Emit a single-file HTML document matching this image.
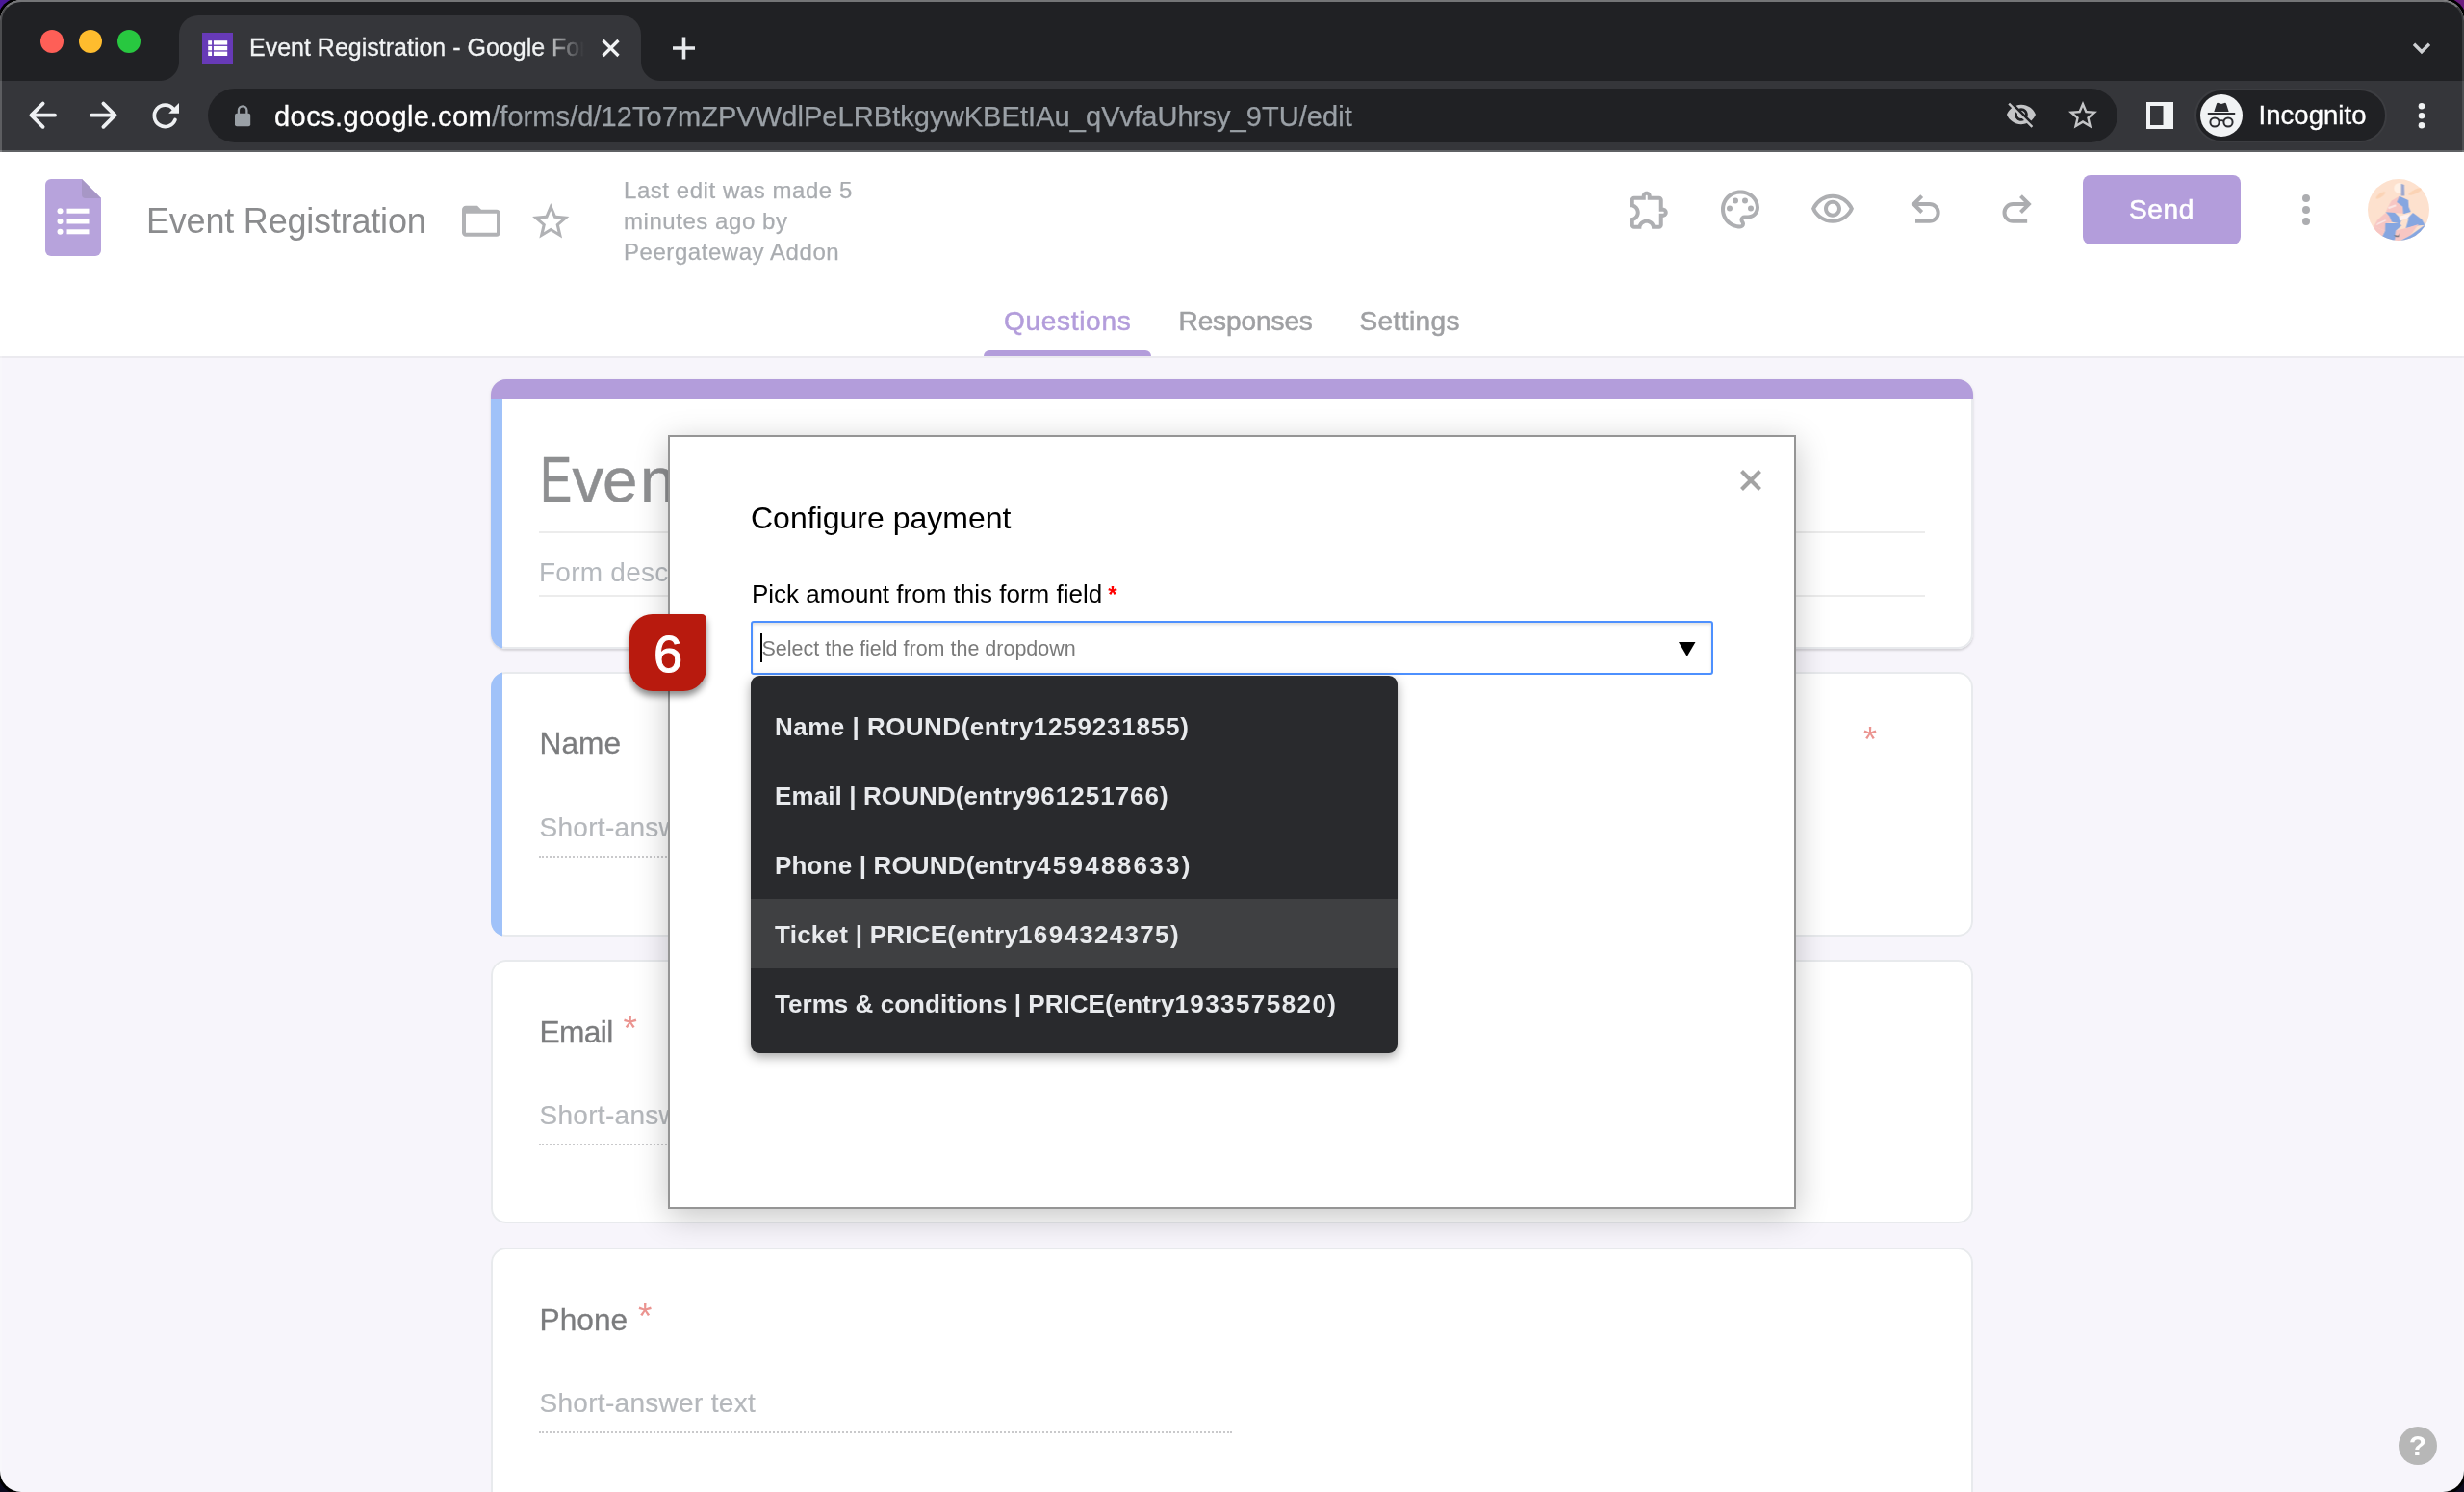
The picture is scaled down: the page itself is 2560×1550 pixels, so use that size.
<!DOCTYPE html>
<html lang="en">
<head>
<meta charset="utf-8">
<title>Event Registration - Google Forms</title>
<style>
*{box-sizing:border-box;margin:0;padding:0}
html,body{width:2560px;height:1550px;overflow:hidden;background:#0b0a1e;font-family:"Liberation Sans",Arial,sans-serif}
.abs{position:absolute}
#desk{position:absolute;left:0;top:0;width:2560px;height:1550px;background:#0b0a1e;overflow:hidden}
#deskTL{position:absolute;left:0;top:0;width:40px;height:40px;background:#4a1799}
#deskTR{position:absolute;right:0;top:0;width:40px;height:40px;background:#6b1c7e}
#win{position:absolute;left:0;top:0;width:2560px;height:1550px;border-radius:22px;overflow:hidden;background:#f7f5fb;will-change:transform;box-shadow:0 0 0 3px #000}
#winEdge{position:absolute;left:0;top:0;width:2560px;height:1550px;border-radius:22px;border-top:2px solid rgba(255,255,255,.38);border-left:2px solid rgba(255,255,255,.2);border-right:2px solid rgba(255,255,255,.12);pointer-events:none;z-index:50}
/* ---------- browser chrome ---------- */
#tabstrip{left:0;top:0;width:2560px;height:84px;background:#202124}
#toolbar{left:0;top:84px;width:2560px;height:72px;background:#35363a}
#tbline{left:0;top:156px;width:2560px;height:2px;background:#5f6164}
.tl{width:24px;height:24px;border-radius:50%;top:31px}
#tab{left:186px;top:16px;width:480px;height:68px;background:#35363a;border-radius:20px 20px 0 0}
#tab:before,#tab:after{content:"";position:absolute;bottom:0;width:20px;height:20px}
#tab:before{left:-20px;background:radial-gradient(circle at 0 0,rgba(0,0,0,0) 19.5px,#35363a 20.5px)}
#tab:after{right:-20px;background:radial-gradient(circle at 100% 0,rgba(0,0,0,0) 19.5px,#35363a 20.5px)}
#tabtitle{left:259px;top:31.500px;width:352px;height:34px;overflow:hidden;white-space:nowrap;color:#f1f3f4;font-size:25px;line-height:34px;-webkit-text-stroke:.3px #f1f3f4}
#tabfade{left:560px;top:30px;width:52px;height:40px;background:linear-gradient(90deg,rgba(53,54,58,0),#35363a 90%)}
#omni{left:216px;top:92px;width:1984px;height:56px;border-radius:28px;background:#202124}
#url{left:285px;top:100.500px;height:40px;line-height:40px;font-size:29px;color:#9aa0a6;-webkit-text-stroke:.25px #9aa0a6;white-space:nowrap;letter-spacing:.07px}
#url b{font-weight:normal;color:#fff;letter-spacing:.46px;-webkit-text-stroke:.3px #fff}
#incog{left:2280px;top:92px;width:200px;height:56px;border-radius:28px;background:#202124;border:2px solid #3c3d41}
#incogtxt{left:2346.500px;top:100px;height:40px;line-height:40px;font-size:27.5px;color:#fff;letter-spacing:.05px;-webkit-text-stroke:.35px #fff}
/* ---------- page header ---------- */
#hdr{left:0;top:158px;width:2560px;height:212px;background:#fff}
#hdrline{left:0;top:370px;width:2560px;height:2px;background:#ebeaef}
#doctitle{left:152px;top:201.5px;height:56px;line-height:56px;font-size:36px;color:#8b8c8e;white-space:nowrap;letter-spacing:-.2px}
#lastedit{left:648px;top:182px;width:300px;font-size:24px;line-height:32px;color:#a9acb0;letter-spacing:.55px;-webkit-text-stroke:.25px #a9acb0}
.ptab{top:312px;height:44px;line-height:44px;font-size:28px;white-space:nowrap;color:#9fa0a3;letter-spacing:.1px;-webkit-text-stroke:.55px currentColor}
#tabul{left:1022px;top:363.700px;width:174px;height:6.800px;background:#b39ddb;border-radius:7px 7px 0 0}
#send{left:2164px;top:182px;width:164px;height:72px;border-radius:8px;background:#b39ddb;color:#fff;font-size:28px;line-height:72px;text-align:center;letter-spacing:.6px;-webkit-text-stroke:.6px #fff}

/* ---------- form ---------- */
.card{left:510px;width:1540px;background:#fff;box-shadow:inset 0 0 0 2px #e8eaed;border-radius:16px;overflow:hidden}
.bluebar{left:0;top:0;width:12px;bottom:0;background:#a0c2f9}
.qtitle{left:50.5px;height:48px;line-height:48px;font-size:31.7px;color:#7b7c7e;white-space:nowrap;-webkit-text-stroke:.3px #7b7c7e}
.qtitle i{font-style:normal;color:#eb9490;font-size:37px;position:relative;top:-2.5px;left:10.8px;letter-spacing:0;-webkit-text-stroke:0}
.sat{left:50.5px;height:40px;line-height:40px;font-size:28px;color:#b5b8bc;white-space:nowrap;letter-spacing:.3px;-webkit-text-stroke:.2px #b5b8bc}
.dots{left:50px;width:720px;height:0;border-top:2px dotted #c9c9cb}
#help{left:2492px;top:1482px;width:40px;height:40px;border-radius:50%;background:#b7b7b7;color:#fff;font-weight:bold;font-size:30px;line-height:40px;text-align:center}

/* ---------- dialog ---------- */
#dlg{left:694px;top:452px;width:1172px;height:804px;background:#fff;border:2px solid #959595;box-shadow:0 8px 32px rgba(0,0,0,.23)}
#dlgtitle{left:780px;top:516px;height:44px;line-height:44px;font-size:32px;color:#000;white-space:nowrap}
#dlglabel{left:781px;top:598px;height:38px;line-height:38px;font-size:26px;color:#000;white-space:nowrap}
#dlglabel i{font-style:normal;color:#f00;margin-left:-1px;font-weight:bold;font-size:24px}
#inp{left:780px;top:645px;width:1000px;height:56px;border:2px solid #4d90fe;border-radius:3px;background:#fff;box-shadow:inset 0 2px 3px rgba(0,0,0,.12)}
#ph{left:791.5px;top:655.500px;height:36px;line-height:36px;font-size:21.5px;color:#7a7a7a;white-space:nowrap}
#caret{left:790px;top:658px;width:2px;height:30px;background:#000}
#dd{left:780px;top:702px;width:672px;height:392px;border-radius:9px;background:#292a2d;box-shadow:0 4px 12px rgba(0,0,0,.35);overflow:hidden}
.opt{left:0;width:672px;height:72px;line-height:70.500px;padding-top:1.500px;padding-left:25px;font-size:26px;font-weight:bold;color:#e8eaed;white-space:nowrap}
#badge{left:654px;top:638px;width:80px;height:80px;border-radius:24px 5px 24px 24px;background:#b81a0e;box-shadow:0 5px 7px rgba(0,0,0,.45);color:#fff;font-weight:normal;-webkit-text-stroke:1.1px #fff;font-size:54px;line-height:83px;text-align:center}
</style>
</head>
<body>
<div id="desk"><div id="deskTL"></div><div id="deskTR"></div>
<div id="win">

<!-- ======= BROWSER CHROME ======= -->
<div id="tabstrip" class="abs"></div>
<div id="toolbar" class="abs"></div>
<div id="tbline" class="abs"></div>
<div class="abs tl" style="left:42px;background:#fe5f57"></div>
<div class="abs tl" style="left:82px;background:#febc2e"></div>
<div class="abs tl" style="left:122px;background:#28c840"></div>
<div id="tab" class="abs"></div>
<svg class="abs" style="left:0;top:0;z-index:5" width="2560" height="158" viewBox="0 0 2560 158" fill="none">
<!-- favicon -->
<rect x="210" y="34" width="32" height="32" fill="#673ab7"/>
<rect x="216.2" y="42.2" width="20" height="15.8" fill="#fff"/>
<rect x="216" y="46.6" width="21" height="1.3" fill="#673ab7"/><rect x="216" y="52.3" width="21" height="1.3" fill="#673ab7"/><rect x="220.1" y="42" width="1.8" height="16.2" fill="#673ab7"/>
<!-- tab close / new tab / chevron -->
<path d="M626.5 42 L642.5 58 M642.5 42 L626.5 58" stroke="#f1f3f4" stroke-width="3.2"/>
<path d="M699 50 H722 M710.5 38.5 V61.5" stroke="#e8eaed" stroke-width="3.6"/>
<path d="M2508 45.800 L2516 53.800 L2524 45.800" stroke="#cdcfd2" stroke-width="3.400"/>
<!-- back / forward / reload -->
<path d="M57 119.7 H32.5 M44.6 107.6 L32.5 119.7 L44.6 131.8" stroke="#eef0f2" stroke-width="3.8" stroke-linecap="round" stroke-linejoin="round"/>
<path d="M95 119.7 H119.5 M107.4 107.6 L119.5 119.7 L107.4 131.8" stroke="#eef0f2" stroke-width="3.8" stroke-linecap="round" stroke-linejoin="round"/>
<path d="M180.2 113.2 A11.2 11.2 0 1 0 182 124.4" stroke="#eef0f2" stroke-width="3.7" stroke-linecap="round"/>
<path d="M186 107 V117.8 H175.2 Z" fill="#eef0f2"/>
<!-- lock -->
<rect x="244" y="117.8" width="16.2" height="13.4" rx="2" fill="#9aa0a6"/>
<path d="M247.9 119 V114.6 a4.25 4.25 0 0 1 8.5 0 V119" stroke="#9aa0a6" stroke-width="2.3"/>
<!-- eye-off -->
<g transform="translate(2083.6,102.6) scale(1.365)" fill="#c4c5c7"><path d="M12 7c2.76 0 5 2.24 5 5 0 .65-.13 1.26-.36 1.83l2.92 2.92c1.51-1.26 2.7-2.89 3.43-4.75-1.73-4.39-6-7.5-11-7.5-1.4 0-2.74.25-3.98.7l2.16 2.16C10.74 7.13 11.35 7 12 7zM2 4.27l2.28 2.28.46.46C3.08 8.3 1.78 10.02 1 12c1.73 4.39 6 7.5 11 7.5 1.55 0 3.03-.3 4.38-.84l.42.42L19.73 22 21 20.73 3.27 3 2 4.27zM7.53 9.8l1.55 1.55c-.05.21-.08.43-.08.65 0 1.66 1.34 3 3 3 .22 0 .44-.03.65-.08l1.55 1.55c-.67.33-1.41.53-2.2.53-2.76 0-5-2.24-5-5 0-.79.2-1.53.53-2.2zm4.31-.78l3.15 3.15.02-.16c0-1.66-1.34-3-3-3l-.17.01z"/></g>
<!-- star -->
<g transform="translate(2146,102) scale(1.5)" fill="#c4c5c7"><path d="M22 9.24l-7.19-.62L12 2 9.19 8.63 2 9.24l5.46 4.73L5.820 21 12 17.270 18.180 21l-1.630-7.030L22 9.240zM12 15.400l-3.760 2.270 1-4.280-3.320-2.880 4.380-.380L12 6.100l1.710 4.040 4.380.380-3.320 2.880 1 4.280L12 15.400z"/></g>
<!-- side panel -->
<rect x="2232" y="108" width="24" height="24" stroke="#f1f3f4" stroke-width="4"/><rect x="2247.5" y="106" width="10.5" height="28" fill="#f1f3f4"/>
<!-- incognito avatar -->
<circle cx="2308" cy="120" r="22" fill="#f1f3f4"/>
<path d="M2300.300 116 L2303 107.800 Q2303.400 106.500 2304.800 107 L2308 108.100 L2311.200 107 Q2312.600 106.500 2313 107.800 L2315.700 116 Z" fill="#2b2c30"/>
<rect x="2293.800" y="117" width="28.400" height="2" fill="#2b2c30"/>
<circle cx="2301" cy="127" r="4.600" stroke="#2b2c30" stroke-width="2"/><circle cx="2315" cy="127" r="4.600" stroke="#2b2c30" stroke-width="2"/>
<path d="M2305.400 126 Q2308 124.300 2310.600 126" stroke="#2b2c30" stroke-width="1.800"/>
<!-- menu dots -->
<circle cx="2516" cy="110.300" r="3.300" fill="#f1f3f4"/><circle cx="2516" cy="120.200" r="3.300" fill="#f1f3f4"/><circle cx="2516" cy="130.200" r="3.300" fill="#f1f3f4"/>
</svg>
<div id="tabtitle" class="abs">Event Registration - Google Forms</div>
<div id="tabfade" class="abs"></div>
<div id="omni" class="abs"></div>
<div id="url" class="abs"><b>docs.google.com</b>/forms/d/12To7mZPVWdlPeLRBtkgywKBEtIAu_qVvfaUhrsy_9TU/edit</div>
<div id="incog" class="abs"></div>
<div id="incogtxt" class="abs">Incognito</div>

<!-- ======= PAGE HEADER ======= -->
<div id="hdr" class="abs"></div>
<div id="hdrline" class="abs"></div>
<div id="doctitle" class="abs">Event Registration</div>
<div id="lastedit" class="abs">Last edit was made 5 minutes ago by Peergateway Addon</div>
<div class="abs ptab" style="left:1043px;color:#b39ddb;letter-spacing:.7px">Questions</div>
<div class="abs ptab" style="left:1224.5px;letter-spacing:-.09px">Responses</div>
<div class="abs ptab" style="left:1412.5px;letter-spacing:.41px">Settings</div>
<div id="tabul" class="abs"></div>
<div id="send" class="abs">Send</div>
<svg class="abs" style="left:0;top:158px;z-index:5" width="2560" height="212" viewBox="0 158 2560 212" fill="none">
<!-- forms logo -->
<path d="M53 186 H85 L105 206 V260 a6 6 0 0 1 -6 6 H53 a6 6 0 0 1 -6 -6 V192 a6 6 0 0 1 6 -6 Z" fill="#b7a3dc"/>
<path d="M85 186 L105 206 H89 a4 4 0 0 1 -4 -4 Z" fill="#a797c6"/>
<circle cx="62.500" cy="219.200" r="3" fill="#fff"/><circle cx="62.500" cy="230" r="3" fill="#fff"/><circle cx="62.500" cy="240.800" r="3" fill="#fff"/>
<rect x="69.500" y="216.700" width="23" height="5" fill="#fff"/><rect x="69.500" y="227.500" width="23" height="5" fill="#fff"/><rect x="69.500" y="238.300" width="23" height="5" fill="#fff"/>
<!-- folder -->
<g transform="translate(476,205.750) scale(2)" fill="#b1b2b5"><path d="M20 6h-8l-2-2H4c-1.100 0-1.990.9-1.990 2L2 18c0 1.100.9 2 2 2h16c1.100 0 2-.9 2-2V8c0-1.100-.9-2-2-2zm0 12H4V8h16v10z"/></g>
<!-- star -->
<g transform="translate(549.200,207.200) scale(1.920)" fill="#b1b2b5"><path d="M22 9.24l-7.19-.62L12 2 9.19 8.63 2 9.24l5.46 4.73L5.820 21 12 17.270 18.180 21l-1.630-7.030L22 9.240zM12 15.400l-3.760 2.270 1-4.280-3.320-2.880 4.380-.380L12 6.100l1.710 4.040 4.380.380-3.320 2.880 1 4.280L12 15.400z"/></g>
<!-- addon puzzle -->
<g transform="translate(1689.750,193.750) scale(2)" fill="#aeafb2"><path d="M10.500 4.500c.28 0 .5.22.5.5v2h6v6h2c.28 0 .5.22.5.5s-.22.5-.5.5h-2v6h-2.120c-.68-1.750-2.390-3-4.380-3s-3.700 1.250-4.380 3H4v-2.120c1.750-.68 3-2.390 3-4.380 0-1.990-1.240-3.700-2.990-4.380L4 7h6V5c0-.28.22-.5.5-.5m0-2C9.120 2.500 8 3.620 8 5H4c-1.100 0-1.990.9-1.990 2v3.800h.29c1.490 0 2.700 1.210 2.700 2.700s-1.210 2.700-2.700 2.700H2V20c0 1.100.9 2 2 2h3.800v-.3c0-1.490 1.210-2.700 2.700-2.700s2.700 1.210 2.700 2.700v.3H17c1.100 0 2-.9 2-2v-4c1.380 0 2.500-1.120 2.500-2.500S20.380 11 19 11V7c0-1.100-.9-2-2-2h-4c0-1.380-1.120-2.500-2.500-2.500z"/></g>
<!-- palette -->
<g transform="translate(1784,193.500) scale(2)" fill="#aeafb2"><path d="M12 22C6.490 22 2 17.510 2 12S6.490 2 12 2s10 4.040 10 9c0 3.310-2.690 6-6 6h-1.770c-.28 0-.5.22-.5.5 0 .12.050.23.130.33.410.47.640 1.060.640 1.670A2.500 2.500 0 0 1 12 22zm0-18c-4.410 0-8 3.590-8 8s3.590 8 8 8c.28 0 .5-.22.5-.5a.54.54 0 0 0-.14-.35c-.41-.46-.63-1.050-.63-1.650a2.500 2.500 0 0 1 2.500-2.500H16c2.210 0 4-1.790 4-4 0-3.860-3.590-7-8-7z"/><circle cx="6.500" cy="11.500" r="1.500"/><circle cx="9.500" cy="7.500" r="1.500"/><circle cx="14.500" cy="7.500" r="1.500"/><circle cx="17.500" cy="11.500" r="1.500"/></g>
<!-- preview eye -->
<g transform="translate(1880,193.750) scale(2)" fill="#aeafb2"><path d="M12 6a9.770 9.770 0 0 1 8.820 5.500C19.170 14.870 15.790 17 12 17s-7.170-2.130-8.820-5.500A9.770 9.770 0 0 1 12 6m0-2C7 4 2.730 7.110 1 11.500 2.730 15.890 7 19 12 19s9.270-3.110 11-7.500C21.270 7.110 17 4 12 4zm0 5a2.500 2.500 0 0 1 0 5 2.500 2.500 0 0 1 0-5m0-2c-2.480 0-4.500 2.020-4.500 4.500S9.520 16 12 16s4.500-2.020 4.500-4.500S14.480 7 12 7z"/></g>
<!-- undo / redo -->
<path d="M1996.700 203.700 L1988.300 212.100 L1996.700 220.500 M1988 212.100 H2004.800 A8.850 8.850 0 0 1 2004.800 229.800 H1990" stroke="#acadb0" stroke-width="4"/>
<path d="M2099.450 203.700 L2107.850 212.100 L2099.450 220.500 M2108.150 212.100 H2091.350 A8.850 8.850 0 0 0 2091.350 229.800 H2106.150" stroke="#acadb0" stroke-width="4"/>
<!-- more dots -->
<circle cx="2396" cy="206" r="4" fill="#acadb0"/><circle cx="2396" cy="218" r="4" fill="#acadb0"/><circle cx="2396" cy="230" r="4" fill="#acadb0"/>
<!-- avatar -->
<defs><clipPath id="avc"><circle cx="2492" cy="218" r="32"/></clipPath><filter id="avb" x="-10%" y="-10%" width="120%" height="120%"><feGaussianBlur stdDeviation="6"/></filter></defs>
<g clip-path="url(#avc)"><rect x="2456" y="182" width="72" height="72" fill="#fde1ce"/>
<g transform="translate(2440,170) scale(.06435)" filter="url(#avb)">
<ellipse cx="520" cy="510" rx="90" ry="30" fill="#fbd3b5" transform="rotate(-35 520 510)"/><ellipse cx="1080" cy="450" rx="120" ry="34" fill="#fbd3b5" transform="rotate(-25 1080 450)"/>
<circle cx="820" cy="395" r="85" fill="#fff1e6"/>
<path d="M850 320 L900 340 L905 520 L850 520 Z" fill="#9aa6cf"/>
<path d="M690 600 L820 525 L790 625 L880 700 L885 805 L600 785 L640 700 Z" fill="#f7c6c3"/>
<path d="M820 525 L965 590 L972 700 L1005 775 L885 810 L875 695 L780 622 Z" fill="#86a6e0"/>
<path d="M640 700 L760 655 L770 685 L650 735 Z" fill="#fbe6e4"/>
<path d="M470 905 L600 790 L665 850 L700 945 L600 965 L590 1085 L410 1015 Z" fill="#f7c6c3"/>
<path d="M470 960 L600 900 L605 925 L440 1000 Z" fill="#fbe6e4"/>
<path d="M600 782 L750 790 L860 905 L830 965 L700 945 L660 850 Z" fill="#86a6e0"/>
<path d="M815 850 L995 805 L965 875 L830 925 Z" fill="#fdf1ef"/>
<path d="M962 872 L1040 790 L1185 900 L1235 990 L1100 1000 L925 1045 L965 905 Z" fill="#86a6e0"/>
<path d="M595 962 L825 962 L855 1000 L765 1080 L745 1260 L540 1180 L590 1085 Z" fill="#86a6e0"/>
<path d="M765 1080 L930 1040 L1130 980 L1000 1155 L800 1260 L745 1260 Z" fill="#f7c6c3"/>
<path d="M1000 1155 L1235 985 L1260 1100 L1050 1260 L800 1260 Z" fill="#86a6e0"/>
<path d="M410 1015 L590 1085 L540 1180 L420 1130 Z" fill="#f7c6c3"/>
<path d="M730 1150 L800 1160 L830 1120 L810 1185 L760 1185 Z" fill="#7d7c86"/>
</g></g>
</svg>

<!-- ======= FORM ======= -->
<div class="abs card" style="top:394px;height:279.500px;box-shadow:inset 0 0 0 2px #e8eaed,0 2px 2px rgba(0,0,0,.1),0 1px 4px rgba(0,0,0,.06)"><div class="abs" style="left:0;top:0;width:1540px;height:20px;background:#b39ddb"></div><div class="abs bluebar" style="top:20px"></div>
<div class="abs" style="left:51.300px;top:63.300px;font-size:65.5px;line-height:84px;color:#8e8f91;white-space:nowrap;letter-spacing:-3.3px;-webkit-text-stroke:.5px #8e8f91"><span style="display:inline-block;transform:scale(.76,1.005);transform-origin:0 100%;margin-right:-7.300px">E</span><span style="letter-spacing:-1.200px">v</span><span style="letter-spacing:2.500px">e</span>nt Registration</div>
<div class="abs" style="left:50px;top:157.700px;width:1440px;height:2px;background:#ececec"></div>
<div class="abs" style="left:50px;top:180.500px;font-size:28px;line-height:40px;color:#b5b9be;white-space:nowrap;letter-spacing:.25px">Form description</div>
<div class="abs" style="left:50px;top:224px;width:1440px;height:2px;background:#ececec"></div>
</div>
<div class="abs card" style="top:698px;height:275px"><div class="abs bluebar"></div>
<div class="abs qtitle" style="top:50.300px">Name</div>
<div class="abs" style="left:1426px;top:51px;font-size:36px;line-height:40px;color:#eb9490">*</div>
<div class="abs sat" style="top:141.700px">Short-answer text</div><div class="abs dots" style="top:190.500px"></div>
</div>
<div class="abs card" style="top:997px;height:274px">
<div class="abs qtitle" style="top:50.300px;letter-spacing:-.6px">Email<i>*</i></div>
<div class="abs sat" style="top:141.700px">Short-answer text</div><div class="abs dots" style="top:190.500px"></div>
</div>
<div class="abs card" style="top:1296px;height:274px">
<div class="abs qtitle" style="top:50.300px">Phone<i>*</i></div>
<div class="abs sat" style="top:141.700px">Short-answer text</div><div class="abs dots" style="top:190.500px"></div>
</div>
<div id="help" class="abs">?</div>


<!-- ======= DIALOG ======= -->
<div id="dlg" class="abs"></div>
<svg class="abs" style="left:1806px;top:486px" width="26" height="26" viewBox="0 0 26 26"><path d="M3.500 3.500 L22.500 22.500 M22.500 3.500 L3.500 22.500" stroke="#a3a3a3" stroke-width="4.200"/></svg>
<div id="dlgtitle" class="abs">Configure payment</div>
<div id="dlglabel" class="abs">Pick amount from this form field <i>*</i></div>
<div id="inp" class="abs"></div>
<div id="ph" class="abs">Select the field from the dropdown</div>
<div id="caret" class="abs"></div>
<svg class="abs" style="left:1744px;top:667px" width="18" height="15" viewBox="0 0 18 15"><path d="M0 0 H17.500 L8.750 15 Z" fill="#000"/></svg>
<div id="dd" class="abs">
<div class="abs opt" style="top:16px"><span style="letter-spacing:.48px">Name | ROUND(entry</span><span style="letter-spacing:.8px">1259231855)</span></div>
<div class="abs opt" style="top:88px"><span style="letter-spacing:.11px">Email | ROUND(entry</span><span style="letter-spacing:1.02px">961251766)</span></div>
<div class="abs opt" style="top:160px"><span style="letter-spacing:.17px">Phone | ROUND(entry</span><span style="letter-spacing:2.3px">459488633)</span></div>
<div class="abs opt" style="top:232px;background:#3f4042"><span style="letter-spacing:.25px">Ticket | PRICE(entry</span><span style="letter-spacing:1.32px">1694324375)</span></div>
<div class="abs opt" style="top:304px"><span style="letter-spacing:.04px">Terms &amp; conditions | PRICE(entry</span><span style="letter-spacing:1.42px">1933575820)</span></div>
</div>
<div id="badge" class="abs">6</div>


</div>
<div id="winEdge"></div>
</div>
</body>
</html>
